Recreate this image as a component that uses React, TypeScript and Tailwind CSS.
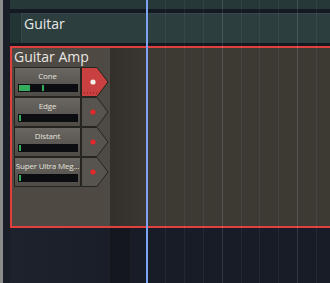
import React from "react";

type Slot = { name: string; fill: number; marker?: number; active?: boolean };

const SLOTS: Slot[] = [
  { name: "Cone", fill: 11, marker: 24, active: true },
  { name: "Edge", fill: 2 },
  { name: "Distant", fill: 2 },
  { name: "Super Ultra Meg...", fill: 2 },
];

const GRID = [165, 184, 203, 222, 241, 259, 278, 297, 316];
const BRIGHT = [222, 297];

function SlotArrow({ active }: { active?: boolean }) {
  return (
    <svg width="28" height="30" viewBox="0 0 28 30" className="block shrink-0">
      <polygon
        points="0.5,0.5 16,0.5 27,15 16,29.5 0.5,29.5"
        fill={active ? "#c8403f" : "#57534e"}
        stroke="#26241f"
        strokeWidth="1"
      />
      {active && (
        <line x1="3" y1="26" x2="16" y2="26" stroke="#7a1f1f" strokeWidth="1" strokeDasharray="1 2" />
      )}
      <circle cx="12" cy="15" r="2.6" fill={active ? "#f2efe9" : "#e3282b"} />
    </svg>
  );
}

function SlotRow({ slot }: { slot: Slot }) {
  return (
    <div className="flex h-[30px]">
      <div className="w-[67px] h-[30px] border border-[#26241f] bg-gradient-to-b from-[#6a6762] to-[#4f4c47] flex flex-col">
        <div className="pt-[3px] text-[8px] leading-[10px] tracking-[-0.2px] text-[#e4e2dd] text-center whitespace-nowrap">
          {slot.name}
        </div>
        <div className="mt-[3px] ml-[3px] w-[60px] h-[8px] bg-[#0c0d10] relative">
          <div className="absolute top-[1px] bottom-[1px] left-[1px] bg-[#34ad5c]" style={{ width: slot.fill }} />
          {slot.marker && (
            <div className="absolute top-[1px] bottom-[1px] w-[2px] bg-[#34ad5c]" style={{ left: slot.marker }} />
          )}
        </div>
      </div>
      <SlotArrow active={slot.active} />
    </div>
  );
}

export default function App() {
  return (
    <div
      className="w-[330px] h-[283px] relative overflow-hidden flex bg-[#181c26]"
      style={{ fontFamily: '"Open Sans", "Noto Sans", sans-serif' }}
    >
      <div className="w-[3px] bg-[#8c8c8c]" />
      <div className="w-[7px] bg-[#1a1e27]" />
      <div className="flex-1 flex flex-col">
        <div className="h-[9px] bg-[#263838]" />
        <div className="h-[4px] bg-[#141922]" />
        <div className="h-[30px] flex bg-[#233434]">
          <div className="w-[11px]" />
          <div className="flex-1 bg-[#2c3e3e] border-t border-l border-[#344747] pl-[2px] text-[14px] leading-[20px] text-[#e6e8e8]">
            Guitar
          </div>
        </div>
        <div className="h-[3px] bg-[#141922]" />
        <div className="h-[182px] border-t-2 border-b-2 border-l-2 border-[#e2403f] flex">
          <div className="w-[98px] bg-[#4e4a43] pl-[2px] flex flex-col">
            <div className="text-[14px] leading-[18px] text-[#e8e6e2] whitespace-nowrap">Guitar Amp</div>
            <div className="mt-[1px] flex flex-col">
              {SLOTS.map((s) => (
                <SlotRow key={s.name} slot={s} />
              ))}
            </div>
          </div>
          <div className="w-[36px] bg-gradient-to-r from-[#33302b] to-[#3a3731]" />
          <div className="flex-1 bg-[#3d3a34]" />
        </div>
        <div className="flex-1 flex">
          <div className="w-[100px] bg-gradient-to-r from-[#1e222c] to-[#1a1e28]" />
          <div className="w-[20px] bg-[#14171e]" />
          <div className="flex-1 bg-[#181c26]" />
        </div>
      </div>

      {GRID.map((x) => (
        <div
          key={x}
          className={`absolute top-0 bottom-0 w-px ${BRIGHT.includes(x) ? "bg-white/[0.12]" : "bg-white/[0.055]"}`}
          style={{ left: x }}
        />
      ))}
      <div className="absolute top-0 bottom-0 left-[146px] w-[2px] bg-[#7ea3f2]" />
    </div>
  );
}
